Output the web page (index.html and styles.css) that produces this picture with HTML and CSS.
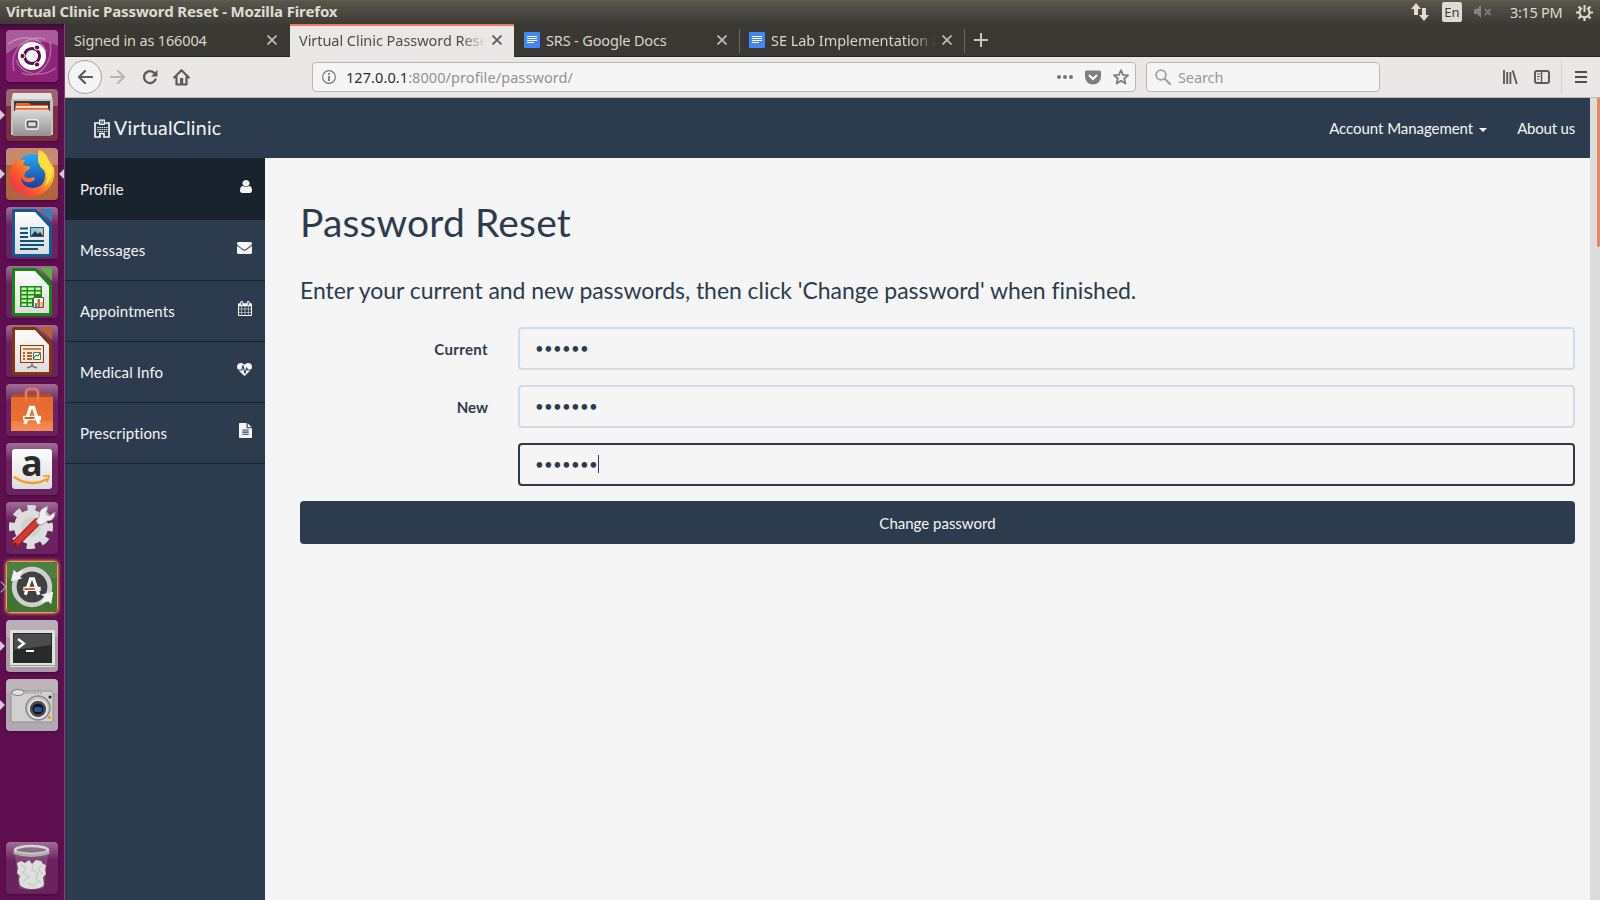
FILE: index.html
```html
<!DOCTYPE html>
<html lang="en">
<head>
<meta charset="utf-8">
<title>Virtual Clinic Password Reset</title>
<link rel="stylesheet" href="styles.css">
</head>
<body>
<svg class="defs" width="0" height="0" aria-hidden="true">
  <defs>
    <linearGradient id="tile" x1="0" y1="0" x2="0" y2="1"><stop offset="0" stop-color="#a06f97"/><stop offset=".35" stop-color="#6c2160"/><stop offset="1" stop-color="#6a2360"/></linearGradient>
    <linearGradient id="silver" x1="0" y1="0" x2="0" y2="1"><stop offset="0" stop-color="#d8d8d8"/><stop offset="1" stop-color="#929292"/></linearGradient>
    <linearGradient id="page" x1="0" y1="0" x2="0" y2="1"><stop offset="0" stop-color="#fdfdfd"/><stop offset="1" stop-color="#dcdcdc"/></linearGradient>
    <linearGradient id="fox" x1="1" y1="0" x2="0" y2="1"><stop offset="0" stop-color="#fff04a"/><stop offset=".35" stop-color="#ffb02e"/><stop offset=".65" stop-color="#ff5a2a"/><stop offset="1" stop-color="#e8205a"/></linearGradient>
    <linearGradient id="globe" x1="0" y1="0" x2="0" y2="1"><stop offset="0" stop-color="#29a9f5"/><stop offset="1" stop-color="#123f9c"/></linearGradient>
    <linearGradient id="bag" x1="0" y1="0" x2="0" y2="1"><stop offset="0" stop-color="#e06c34"/><stop offset=".75" stop-color="#ee6f2c"/><stop offset="1" stop-color="#ee8144"/></linearGradient>
  </defs>
</svg>

<header class="panel">
  <span class="panel-title">Virtual Clinic Password Reset - Mozilla Firefox</span>
  <div class="tray">
    <svg class="tray-net" width="18" height="18" viewBox="0 0 18 18" fill="#dfdbd2"><path d="M5 0l5 6H7v6H3V6H0zM13 18l5-6h-3V5h-4v7H8z"/></svg>
    <span class="lang">En</span>
    <svg class="tray-vol" width="18" height="14" viewBox="0 0 18 14"><path d="M0 4h3l4-4v13L3 9H0z" fill="#85827b"/><path d="M11 4l5.500 6M16.500 4L11 10" stroke="#85827b" stroke-width="1.800"/></svg>
    <span class="clock">3:15 PM</span>
    <svg class="tray-gear" width="17" height="17" viewBox="0 0 17 17" fill="none" stroke="#dfdbd2"><path d="M6 4A5 5 0 1 0 11 4" stroke-width="2"/><path d="M8.500 1v7" stroke-width="2"/><path d="M8.500 13.500V17M0 8.500h3.500M13.500 8.500H17M2.500 2.500l2 2M14.500 2.500l-2 2M2.500 14.500l2-2M14.500 14.500l-2-2" stroke-width="2.200"/></svg>
  </div>
</header>

<div class="desktop">
  <nav class="launcher">
    <div class="app"><svg viewBox="0 0 52 52"><rect width="52" height="52" rx="4" fill="#8d2478"/><path d="M0 4a4 4 0 0 1 4-4h44a4 4 0 0 1 4 4v12Q26 4 0 24z" fill="#fff" opacity=".25"/><g fill="none" stroke="#fff" stroke-width="1.500" opacity=".3"><path d="M8 41C3 20 20 4 39 9M44 12c4 22-12 38-28 31M2 14c14-10 34-8 38 8M50 38C35 49 15 44 10 30"/></g><circle cx="26" cy="26" r="14" fill="#fff"/><circle cx="26" cy="26" r="7.600" fill="none" stroke="#5b1050" stroke-width="3"/><g fill="#5b1050" stroke="#fff" stroke-width="1"><circle cx="16.500" cy="26" r="2.600"/><circle cx="31" cy="17.500" r="2.600"/><circle cx="31" cy="34.500" r="2.600"/></g></svg></div>
    <div class="app running"><svg viewBox="0 0 52 52"><rect width="52" height="52" rx="4" fill="#7d2e41"/><path d="M0 4a4 4 0 0 1 4-4h44a4 4 0 0 1 4 4v13H0z" fill="#fff" opacity=".25"/><path d="M7 4h38l2 8v34H5V12z" fill="#c3c3c3"/><path d="M7 4h38l1 6H6z" fill="#e3e3e3"/><path d="M8 12h36v12H8z" fill="#3b3a39"/><path d="M10 14h13l2 2h17v8H9v-6z" fill="#dd6b30"/><path d="M10 18h32" stroke="#fff" stroke-width="1.500"/><path d="M9 20h34v4H9z" fill="#e98e4d"/><path d="M7 23l3-2h32l3 2v24H7z" fill="url(#silver)"/><rect x="19.500" y="30.500" width="13" height="10" rx="2" fill="#c9c9c9" stroke="#eee"/><rect x="21.500" y="32.500" width="9" height="5.500" rx="1" fill="#ddd" stroke="#4b4b4b" stroke-width="1.500"/></svg></div>
    <div class="app running focused"><svg viewBox="0 0 52 52"><rect width="52" height="52" rx="4" fill="#b06440"/><path d="M0 4a4 4 0 0 1 4-4h44a4 4 0 0 1 4 4v13H0z" fill="#fff" opacity=".25"/><circle cx="27" cy="23" r="17" fill="url(#globe)"/><path d="M8 8l3 6q4-3 8-2l-2 5 7 2q1 2-4 4l-2 5q4 4 9 1 4 1 0 4-8 4-12-4 1 11 12 11 12-1 12-13 0-5-5-8 1-9-1-17 7 2 9 9l6 9q2 14-7 22-7 7-16 6C10 47 2 38 4 26q0-7 4-9z" fill="url(#fox)"/><path d="M33 2q10 6 10 15l4 2q0 14-9 20 6-10 0-18-6-4-6-10 0-5 1-9z" fill="#ffdf3b"/></svg></div>
    <div class="app"><svg viewBox="0 0 52 52"><rect width="52" height="52" rx="4" fill="url(#tile)"/><path d="M8 2h22l16 16v30q0 2-2 2H8q-2 0-2-2V4q0-2 2-2z" fill="#0e5d92"/><path d="M9 5h20l14 15v27H9z" fill="url(#page)"/><path d="M34 2h12v13z" fill="#2f82b6"/><path d="M14 21.500h8M14 26h8M14 30h8M14 34h24M14 38h24M14 42h18" stroke="#114f7b" stroke-width="2"/><rect x="24.500" y="20.500" width="13" height="9" fill="#8fc6ea" stroke="#155d8f"/><path d="M25 29l4-5 3 3 2-2 3 4z" fill="#333"/><circle cx="35" cy="23" r="1.500" fill="#f7d038"/></svg></div>
    <div class="app"><svg viewBox="0 0 52 52"><rect width="52" height="52" rx="4" fill="url(#tile)"/><path d="M8 2h22l16 16v30q0 2-2 2H8q-2 0-2-2V4q0-2 2-2z" fill="#16880e"/><path d="M9 5h20l14 15v27H9z" fill="url(#page)"/><path d="M34 2h12v13z" fill="#4fb543"/><path d="M14 20h22v21H14z" fill="#1c8b14"/><g fill="#c8f0b0"><path d="M15.500 21.500h5v2.500h-5zM22 21.500h6v2.500h-6zM29.500 21.500h5v2.500h-5zM15.500 25.500h5v2.500h-5zM22 25.500h6v2.500h-6zM29.500 25.500h5v2.500h-5zM15.500 29.500h5V32h-5zM22 29.500h6V32h-6zM15.500 33.500h5V36h-5zM22 33.500h4V36h-4zM15.500 37.500h5V40h-5zM22 37.500h4V40h-4z"/></g><path d="M27.500 31.500h10v10h-10z" fill="#fff" stroke="#555"/><path d="M29 37h2v4h-2z" fill="#2d88cf"/><path d="M31.500 33h2.500v8h-2.500z" fill="#e55e25"/><path d="M34.500 36H37v5h-2.500z" fill="#f2b821"/></svg></div>
    <div class="app"><svg viewBox="0 0 52 52"><rect width="52" height="52" rx="4" fill="url(#tile)"/><path d="M8 2h22l16 16v30q0 2-2 2H8q-2 0-2-2V4q0-2 2-2z" fill="#84370b"/><path d="M9 5h20l14 15v27H9z" fill="url(#page)"/><path d="M34 2h12v13z" fill="#b8622a"/><path d="M26 38v3l-5 2M26 41l5 2" stroke="#777" stroke-width="1.500" fill="none"/><rect x="14.500" y="20.500" width="23" height="17" fill="#fbe6d6" stroke="#8a3b10"/><path d="M17 24h18" stroke="#cc5a20" stroke-width="1.500"/><path d="M17 28h2m2 0h5M17 31h2m2 0h5M17 34h2m2 0h5" stroke="#8a3b10" stroke-width="1.600"/><path d="M27.500 27.500h7v7h-7z" fill="#fff" stroke="#666"/><path d="M28 33l2-3 2 1 2-3" stroke="#24982a" fill="none" stroke-width="1.300"/></svg></div>
    <div class="app"><svg viewBox="0 0 52 52"><rect width="52" height="52" rx="4" fill="url(#tile)"/><path d="M5 14l3-4h36l3 4z" fill="#b54c20"/><path d="M5 13h42v34H5z" fill="url(#bag)"/><path d="M5 37h42v10H5z" fill="#fff" opacity=".12"/><path d="M20 18V9q0-4 4-4h4q4 0 4 4v9" fill="none" stroke="#e97a46" stroke-width="2.600"/><path d="M19 40L24.500 23.500h3L33 40" fill="none" stroke="#fff" stroke-width="3.400"/><path d="M17 34h18" stroke="#fff" stroke-width="4.500"/><path d="M18.500 34h10" stroke="#e85a1e" stroke-width="2"/></svg></div>
    <div class="app"><svg viewBox="0 0 52 52"><rect width="52" height="52" rx="4" fill="url(#tile)"/><rect x="6" y="6" width="40" height="40" rx="3" fill="url(#page)"/><text x="15" y="33" class="amazon-a">a</text><path d="M8 34q17 11 33 2" fill="none" stroke="#f79a1d" stroke-width="2.500"/><path d="M37 33l6 0-2 6" fill="none" stroke="#f79a1d" stroke-width="1.700"/></svg></div>
    <div class="app"><svg viewBox="0 0 52 52"><rect width="52" height="52" rx="4" fill="url(#tile)"/><circle cx="25" cy="25" r="19" fill="none" stroke="#dcdcdc" stroke-width="6" stroke-dasharray="8 6.920" transform="rotate(-12 25 25)"/><circle cx="25" cy="25" r="12.500" fill="#ececec" stroke="#dedede" stroke-width="9"/><circle cx="25" cy="25" r="10" fill="#d0d0d0"/><path d="M10 41L31 20" stroke="#9d1c1c" stroke-width="7.500" stroke-linecap="round"/><path d="M10 41L31 20" stroke="#d43a33" stroke-width="5.500" stroke-linecap="round"/><path d="M32 22l-2-3 3-4q-1-8 9-11l-2 8 3 2 6-4q0 9-8 9l-5 4z" fill="#efefef" stroke="#a2a2a2"/><circle cx="9" cy="42.500" r="2" fill="#811717"/></svg></div>
    <div class="app glow urgent"><svg viewBox="0 0 52 52"><rect width="52" height="52" rx="4" fill="#3e7533"/><path d="M0 4a4 4 0 0 1 4-4h44a4 4 0 0 1 4 4v13H0z" fill="#fff" opacity=".08"/><circle cx="26" cy="26" r="18.500" fill="#3f403f" stroke="#cfcfcf" stroke-width="5"/><path d="M4 20L7 8l3 3 7-3-4 7 3 2zM48 31l-2 13-3-3-8 2 4-7-4-2z" fill="#f1f1f1"/><path d="M19 34l5.500-16.500h3L33 34" fill="none" stroke="#fff" stroke-width="3.400"/><path d="M17 28h18" stroke="#fff" stroke-width="4.500"/><path d="M18 28h11" stroke="#ea5b1c" stroke-width="2"/></svg></div>
    <div class="app running"><svg viewBox="0 0 52 52"><rect width="52" height="52" rx="4" fill="#a99aa6"/><path d="M0 4a4 4 0 0 1 4-4h44a4 4 0 0 1 4 4v13H0z" fill="#fff" opacity=".2"/><rect x="4" y="10" width="45" height="37" rx="1" fill="#e0e0de"/><rect x="7" y="13" width="39" height="30" fill="#282b2a"/><path d="M8 14h37v11L8 30z" fill="#4a4d4c"/><path d="M12 19l6 4.500-6 4.500" fill="none" stroke="#fff" stroke-width="2.200"/><path d="M20 31h8" stroke="#fff" stroke-width="2"/><path d="M4 45.500h45" stroke="#9d9d9d"/></svg></div>
    <div class="app running"><svg viewBox="0 0 52 52"><rect width="52" height="52" rx="4" fill="#b3a8b0"/><path d="M0 4a4 4 0 0 1 4-4h44a4 4 0 0 1 4 4v10H0z" fill="#fff" opacity=".15"/><rect x="5" y="12" width="42" height="31" rx="2" fill="#d0d0d0" stroke="#8f8f8f"/><ellipse cx="12" cy="13.500" rx="6" ry="3" fill="#e0e0e0" stroke="#777"/><path d="M19 14h17" stroke="#888" stroke-dasharray="2 1"/><circle cx="32" cy="29" r="12" fill="#c5c5c5" stroke="#8a8a8a" stroke-width="1.500"/><circle cx="32" cy="30" r="9" fill="#4c4e50" stroke="#eee" stroke-width="1.500"/><circle cx="32" cy="30" r="5.500" fill="#12161c"/><rect x="28" y="28" width="8" height="5" rx="2" fill="#225a9b"/><circle cx="44" cy="18" r="1.500" fill="#222"/><rect x="42" y="37" width="3" height="3" fill="#f39b1b"/></svg></div>
    <div class="app trash"><svg viewBox="0 0 52 52"><rect width="52" height="52" rx="4" fill="url(#tile)"/><path d="M9 13l4 33q12 4 25 0l4-33z" fill="#a995a7" opacity=".3"/><path d="M11 21l4-2 4 2 4-3 3 4 4-4 5 1 2 3 3 1-1 5 1 4-3 3 1 8q-3 4-12 4t-12-4l-1-5 1-4-3-3 1-5z" fill="#dfe0de"/><path d="M15 23l5 3-3 5 6 4-6 5M27 22l-1 6 6 3-2 6 5 4M36 23l-4 5 5 4M22 41l5 3 4-4" fill="none" stroke="#c6c8c4" stroke-width="1.200"/><ellipse cx="25.500" cy="8" rx="17.500" ry="5" fill="#8b6d87"/><ellipse cx="25.500" cy="8" rx="16.500" ry="4" fill="none" stroke="#d6d7d5" stroke-width="2.500"/><path d="M7.500 9v3q18 6 36 0V9q-18 6-36 0z" fill="#aeb0ac"/></svg></div>
  </nav>

  <div class="browser">
    <div class="tabs">
      <div class="tab first"><span class="tab-label signed">Signed in as 166004</span><svg class="x" viewBox="0 0 10 10"><path d="M.5.500l9 9M9.500.500l-9 9"/></svg></div>
      <div class="tab active"><span class="tab-label fade">Virtual Clinic Password Reset</span><svg class="x" viewBox="0 0 10 10"><path d="M.5.500l9 9M9.500.500l-9 9"/></svg></div>
      <div class="tab"><svg class="doc" viewBox="0 0 16 16"><rect width="16" height="16" rx="1" fill="#4285f4"/><path d="M3 4.500h10M3 6.500h10M3 8.500h10M3 10.500h7" stroke="#fff"/></svg><span class="tab-label srs">SRS - Google Docs</span><svg class="x" viewBox="0 0 10 10"><path d="M.5.500l9 9M9.500.500l-9 9"/></svg></div>
      <div class="tab"><svg class="doc" viewBox="0 0 16 16"><rect width="16" height="16" rx="1" fill="#4285f4"/><path d="M3 4.500h10M3 6.500h10M3 8.500h10M3 10.500h7" stroke="#fff"/></svg><span class="tab-label fade">SE Lab Implementation Plan</span><svg class="x" viewBox="0 0 10 10"><path d="M.5.500l9 9M9.500.500l-9 9"/></svg></div>
      <svg class="plus" width="14" height="14" viewBox="0 0 14 14"><path d="M7 0v14M0 7h14" stroke="#c9c6bd" stroke-width="2"/></svg>
    </div>

    <div class="toolbar">
      <span class="back"><svg width="16" height="14" viewBox="0 0 16 14"><path d="M15 7H2M8 1L2 7l6 6" fill="none" stroke="#5b5b5b" stroke-width="2.200" stroke-linecap="round" stroke-linejoin="round"/></svg></span>
      <svg class="forward" width="16" height="14" viewBox="0 0 16 14"><path d="M1 7h13M8 1l6 6-6 6" fill="none" stroke="#b7b6b5" stroke-width="2.200" stroke-linecap="round" stroke-linejoin="round"/></svg>
      <svg class="reload" width="16" height="16" viewBox="0 0 16 16"><path d="M12.600 4.200A6 6 0 1 0 13.500 10.500" fill="none" stroke="#5b5b5b" stroke-width="2.300" stroke-linecap="round"/><path d="M15.500.800V7.500H9z" fill="#5b5b5b"/></svg>
      <svg class="home" width="17" height="17" viewBox="0 0 17 17"><path d="M1.200 8.500l7.300-7.300 7.300 7.300M3.500 8v7.500h10V8" fill="none" stroke="#5b5b5b" stroke-width="2.200" stroke-linecap="round" stroke-linejoin="round"/><path d="M7 9h3.200v6H7z" fill="#5b5b5b"/></svg>
      <div class="field url">
        <svg width="14" height="14" viewBox="0 0 14 14"><circle cx="7" cy="7" r="6.400" fill="none" stroke="#777" stroke-width="1.200"/><path d="M7 3v1.800M7 6v5" stroke="#777" stroke-width="1.800"/></svg>
        <span class="address"><b>127.0.0.1</b>:8000/profile/password/</span>
        <svg class="dots" width="16" height="4" viewBox="0 0 16 4" fill="#747474"><circle cx="2" cy="2" r="2"/><circle cx="8" cy="2" r="2"/><circle cx="14" cy="2" r="2"/></svg>
        <svg class="pocket" width="16" height="15" viewBox="0 0 16 15"><path d="M1.500.500h13q1.500 0 1.500 1.500v4.500a8 8 0 0 1-16 0V2Q0 .500 1.500.500z" fill="#7e7e7e"/><path d="M4.500 5.500L8 9l3.500-3.500" stroke="#fff" stroke-width="2" fill="none" stroke-linecap="round"/></svg>
        <svg class="star" width="16" height="16" viewBox="0 0 16 16"><path d="M8 1.200l2 4.600 5 .4-3.800 3.300 1.200 5L8 11.800l-4.400 2.700 1.200-5L1 6.200l5-.4z" fill="none" stroke="#7e7e7e" stroke-width="1.800" stroke-linejoin="round"/></svg>
      </div>
      <div class="field search">
        <svg width="16" height="16" viewBox="0 0 16 16" fill="none" stroke="#a0a0a0"><circle cx="6" cy="6" r="4.900" stroke-width="1.800"/><path d="M9.800 9.800l5.200 5.200" stroke-width="2.200" stroke-linecap="round"/></svg>
        <span>Search</span>
      </div>
      <svg class="library" width="15" height="14" viewBox="0 0 15 14" stroke="#5b5b5b" stroke-width="1.900"><path d="M1 0v14M4.200 2v12M7.400 2v12M9.700.400L13.800 14"/></svg>
      <svg class="sidebar-icon" width="16" height="14" viewBox="0 0 16 14" fill="none" stroke="#5b5b5b"><rect x="1" y="1" width="14" height="12" rx="2" stroke-width="2"/><path d="M7.500 1v12" stroke-width="1.500"/><path d="M3 4h3M3 6.500h3M3 9h2"/></svg>
      <i class="rule"></i>
      <svg width="12" height="12" viewBox="0 0 12 12"><path d="M0 1h12M0 6h12M0 11h12" stroke="#4e4e4e" stroke-width="2"/></svg>
    </div>

    <div class="viewport">
      <div class="site">
        <div class="navbar">
          <svg class="hospital" width="16" height="19" viewBox="0 0 16 19"><path d="M5 4H1v14h5v-3.500h4V18h5V4h-4" fill="none" stroke="#f5f5f5" stroke-width="1.700"/><path d="M5 .5h6v5.500H5z" fill="#f5f5f5"/><path d="M6.800 1.500v3.500M9.200 1.500v3.500M7 3.300h2" stroke="#2c3c4e"/><path d="M3.300 8.500h10M3.300 10.500h10M3.300 12.500h10" stroke="#f5f5f5" stroke-width="1.200" stroke-dasharray="1.400 .800"/></svg>
          <span class="brand">VirtualClinic</span>
          <span class="link account">Account Management</span><i class="caret"></i>
          <span class="link about">About us</span>
        </div>
        <div class="body">
          <ul class="menu">
            <li class="current">Profile<svg width="12" height="13" viewBox="256 128 1280 1536" preserveAspectRatio="none"><path d="M1536 1399q0 109-62.500 187t-150.500 78h-854q-88 0-150.500-78t-62.500-187q0-85 8.500-160.500t31.500-152 58.500-131 94-89 134.500-34.500q131 128 313 128t313-128q76 0 134.500 34.500t94 89 58.500 131 31.500 152 8.500 160.500zm-256-887q0 159-112.500 271.500t-271.500 112.500-271.500-112.500-112.500-271.500 112.500-271.500 271.500-112.500 271.500 112.500 112.500 271.500z"/></svg></li>
            <li>Messages<svg class="mail" width="15" height="12" viewBox="0 256 1792 1408" preserveAspectRatio="none"><path d="M1792 710v794q0 66-47 113t-113 47h-1472q-66 0-113-47t-47-113v-794q44 49 101 87 362 246 497 345 57 42 92.500 65.500t94.500 48 110 24.500h2q51 0 110-24.500t94.500-48 92.500-65.500q170-123 498-345 57-39 100-87zm0-294q0 79-49 151t-122 123q-376 261-468 325-10 7-42.500 31t-54 38.500-52 32.500-57.500 27-50 9h-2q-23 0-50-9t-57.500-27-52-32.500-54-38.500-42.500-31q-91-64-262-182.500t-205-142.500q-62-42-117-115.500t-55-136.500q0-78 41.500-130t118.500-52h1472q65 0 112.500 47t47.500 113z"/></svg></li>
            <li>Appointments<svg width="14" height="15" viewBox="64 0 1664 1792" preserveAspectRatio="none"><path d="M192 1664h288v-288h-288v288zm352 0h320v-288h-320v288zm-352-352h288v-320h-288v320zm352 0h320v-320h-320v320zm-352-384h288v-288h-288v288zm736 736h320v-288h-320v288zm-384-736h320v-288h-320v288zm768 736h288v-288h-288v288zm-384-352h320v-320h-320v320zm-352-864v-288q0-13-9.500-22.500t-22.500-9.500h-64q-13 0-22.500 9.500t-9.500 22.500v288q0 13 9.500 22.500t22.500 9.500h64q13 0 22.500-9.500t9.500-22.500zm736 864h288v-320h-288v320zm-384-384h320v-288h-320v288zm384 0h288v-288h-288v288zm32-480v-288q0-13-9.500-22.500t-22.500-9.500h-64q-13 0-22.500 9.500t-9.500 22.500v288q0 13 9.500 22.500t22.500 9.500h64q13 0 22.500-9.500t9.500-22.500zm384-64v1280q0 52-38 90t-90 38h-1408q-52 0-90-38t-38-90v-1280q0-52 38-90t90-38h128v-96q0-66 47-113t113-47h64q66 0 113 47t47 113v96h384v-96q0-66 47-113t113-47h64q66 0 113 47t47 113v96h128q52 0 90 38t38 90z"/></svg></li>
            <li>Medical Info<svg width="15" height="13" viewBox="0 128 1792 1536" preserveAspectRatio="none"><path d="M1280 1024h305q-5 6-10 10.500t-9 7.500l-3 4-623 600q-18 18-44 18t-44-18l-624-602q-5-2-21-20h369q22 0 39.500-13.500t22.500-34.500l70-281 190 667q6 20 23 33t39 13q21 0 38-13t23-33l146-485 56 112q18 35 57 35zm512-428q0 145-103 300h-369l-111-221q-8-17-25.500-27t-36.500-8q-45 5-56 46l-129 430-196-686q-6-20-23.500-33t-39.500-13-39 13.500-22 34.500l-116 464h-423q-103-155-103-300 0-220 127-344t351-124q62 0 126.500 21.500t120 58 95.500 68.500 76 68q36-36 76-68t95.500-68.500 120-58 126.500-21.500q224 0 351 124t127 344z"/></svg></li>
            <li>Prescriptions<svg width="13" height="15" viewBox="128 0 1536 1792" preserveAspectRatio="none"><path d="M1596 476q14 14 28 36h-472v-472q22 14 36 28zm-476 164h544v1056q0 40-28 68t-68 28h-1344q-40 0-68-28t-28-68v-1600q0-40 28-68t68-28h800v544q0 40 28 68t68 28zm160 736v-64q0-14-9-23t-23-9h-704q-14 0-23 9t-9 23v64q0 14 9 23t23 9h704q14 0 23-9t9-23zm0-256v-64q0-14-9-23t-23-9h-704q-14 0-23 9t-9 23v64q0 14 9 23t23 9h704q14 0 23-9t9-23zm0-256v-64q0-14-9-23t-23-9h-704q-14 0-23 9t-9 23v64q0 14 9 23t23 9h704q14 0 23-9t9-23z"/></svg></li>
          </ul>
          <main>
            <h1>Password Reset</h1>
            <p class="lead">Enter your current and new passwords, then click 'Change password' when finished.</p>
            <div class="row"><label class="wide">Current</label><div class="input">••••••</div></div>
            <div class="row"><label>New</label><div class="input">•••••••</div></div>
            <div class="row"><label></label><div class="input focus">•••••••<i class="cursor"></i></div></div>
            <button type="button">Change password</button>
          </main>
        </div>
      </div>
      <div class="scrollbar"><i></i></div>
    </div>
  </div>
</div>
</body>
</html>
```

FILE: styles.css
```css
* { box-sizing: border-box; }
body {
  margin: 0; width: 1600px; height: 900px; overflow: hidden;
  display: flex; flex-direction: column;
  font-family: "Noto Sans", sans-serif; font-size: 14.5px;
}
svg { display: block; flex: none; }
.defs { position: absolute; }

/* top panel */
.panel {
  height: 24px; flex: none; display: flex; align-items: center; justify-content: space-between;
  padding: 0 7px 0 6px; color: #dfdbd2;
  background: linear-gradient(#5f5d53 0, #57544a 2px, #3c3b37 24px);
}
.panel-title { font-weight: 700; font-size: 15px; letter-spacing: -.13px; white-space: nowrap; padding-bottom: 2px; }
.tray { display: flex; align-items: center; }
.lang {
  width: 20px; height: 20px; margin-left: 13px; border-radius: 2px; background: #dfdbd2; color: #3c3b37;
  font-size: 13px; line-height: 21px; text-align: center;
}
.tray-vol { margin-left: 12px; }
.clock { width: 53px; margin-left: 18px; white-space: nowrap; letter-spacing: -.3px; padding-bottom: 1px; }
.tray-gear { margin-left: 13px; }

.desktop { flex: 1; display: flex; min-height: 0; }

/* launcher */
.launcher {
  width: 65px; flex: none; padding: 6px 0 6px 6px; display: flex; flex-direction: column; gap: 7px;
  background: linear-gradient(#3f0a36 0, #5f0f50 8px, #5f0f50 100%); border-right: 1px solid #84407a;
}
.app { position: relative; width: 52px; height: 52px; border-radius: 4px; box-shadow: 0 1px 3px rgba(0,0,0,.35); }
.app svg { width: 52px; height: 52px; }
.glow { box-shadow: 0 0 3px 1px #e0843f; }
.glow svg { border-radius: 4px; border: 1px solid #f0a05a; }
.trash { margin-top: auto; }
.running::before, .focused::after, .urgent::before {
  content: ""; position: absolute; top: 21px; border: 5px solid transparent;
}
.running::before { left: -6px; border-left-color: #d5ccd3; border-right: 0; }
.focused::after { right: -6px; border-right-color: #d5ccd3; border-left: 0; }
.urgent::before { left: -9px; top: 22px; width: 7px; height: 7px; border: solid #86b9e0; border-width: 1px 1px 0 0; transform: rotate(45deg); }
.amazon-a { font: 700 36px "Open Sans", sans-serif; fill: #2b2b2b; }

/* browser chrome */
.browser { flex: 1; display: flex; flex-direction: column; min-width: 0; }
.tabs { height: 33px; flex: none; display: flex; background: #3a3833; border-bottom: 1px solid #2a2226; }
.tab {
  width: 225px; height: 32px; display: flex; align-items: center; padding: 0 13px 0 9px; color: #d8d5cc;
  background: linear-gradient(#6b6963, #6b6963) right 5px / 1px 24px no-repeat;
}
.tab.first { background: none; }
.tab.active { width: 224px; height: 33px; background: #e9e8e7; color: #4d4d4d; border-top: 2px solid #ed7d51; padding: 0 12px 3px 9px; }
.tab.active + .tab { width: 226px; padding-left: 10px; }
.tab-label { flex: 1; white-space: nowrap; overflow: hidden; line-height: 24px; letter-spacing: -.05px; }
.signed, .srs { letter-spacing: -.15px; }
.fade { -webkit-mask: linear-gradient(90deg, #000 calc(100% - 25px), transparent); mask: linear-gradient(90deg, #000 calc(100% - 25px), transparent); }
.x { width: 10px; height: 10px; margin-left: 6px; fill: none; stroke: #bdbab2; stroke-width: 1.8; }
.active .x { stroke: #5b5b5b; }
.doc { width: 16px; height: 16px; margin-right: 6px; }
.plus { margin: 9px 0 0 9px; }
.toolbar {
  height: 41px; flex: none; display: flex; align-items: center; padding: 0 13px 0 3px;
  background: #e9e8e7; border-bottom: 1px solid #bdbbb7;
}
.back { width: 34px; height: 34px; border: 1px solid #a3a2a1; border-radius: 50%; background: #f4f4f4; display: flex; align-items: center; justify-content: center; }
.forward { margin-left: 8px; }
.reload { margin-left: 16px; }
.home { margin-left: 15px; }
.field { height: 30px; display: flex; align-items: center; background: #f5f5f5; border: 1px solid #bab8b4; border-radius: 4px; }
.url { width: 824px; margin-left: 122px; padding: 0 6px 0 9px; }
.address { flex: 1; margin-left: 10px; color: #929292; letter-spacing: .08px; }
.address b { font-weight: 400; color: #2e2e2e; }
.pocket { margin-left: 12px; }
.star { margin-left: 12px; }
.search { width: 234px; margin-left: 10px; padding-left: 8px; color: #999; }
.search span { margin-left: 7px; letter-spacing: -.1px; }
.library { margin-left: 123px; }
.sidebar-icon { margin-left: 16px; }
.rule { width: 1px; height: 34px; background: #d0cfce; margin: 0 13px 0 11px; }

/* web page */
.viewport { flex: 1; display: flex; min-height: 0; font-family: Lato, sans-serif; font-size: 15px; }
.site { flex: 1; display: flex; flex-direction: column; background: #f5f5f5; }
.scrollbar { width: 10px; background: #dcdcdc; display: flex; justify-content: flex-end; }
.scrollbar i { width: 3px; height: 149px; background: #e58765; border-radius: 0 0 2px 2px; }
.navbar { height: 60px; flex: none; background: #2c3c4e; color: #f5f5f5; display: flex; align-items: center; padding: 0 15px 0 29px; }
.brand { flex: 1; margin-left: 4px; font-size: 19.5px; letter-spacing: .25px; padding-bottom: 2px; }
.account { letter-spacing: -.05px; }
.caret { margin: 3px 0 0 6px; border: 4px solid transparent; border-top-color: #f5f5f5; border-bottom: 0; }
.about { margin-left: 30px; letter-spacing: -.2px; }
.body { flex: 1; display: flex; min-height: 0; }
.menu { width: 200px; flex: none; margin: 0; padding: 0; list-style: none; background: #2c3c4e; color: #f5f5f5; letter-spacing: .15px; }
.menu li { height: 61px; display: flex; justify-content: space-between; align-items: center; padding: 0 13px 1px 15px; border-bottom: 1px solid #19232d; }
.menu .current { height: 62px; padding-top: 1px; background: #19232d; border-color: #19232d; }
.menu svg { fill: #f5f5f5; margin-bottom: 5px; }
.menu .mail { margin-bottom: 4px; }
main { flex: 1; padding: 41px 15px 0 35px; color: #2c3c4e; }
h1 { margin: 0; font-weight: 400; font-size: 39px; line-height: 46px; letter-spacing: .15px; }
.lead { margin: 30px 0 22px; font-size: 23px; line-height: 30px; white-space: nowrap; letter-spacing: -.05px; }
.row { display: flex; height: 43px; margin-bottom: 15px; }
.row label { width: 188px; margin-right: 30px; text-align: right; font-weight: 700; line-height: 44px; }
.row .wide { letter-spacing: .35px; }
.input { flex: 1; display: flex; align-items: center; border: 2px solid #d3dce4; border-radius: 4px; padding: 0 15px 2px; letter-spacing: .3px; }
.input.focus { border-color: #2c3c4e; }
.cursor { width: 1px; height: 18px; background: #2c3c4e; }
button { display: block; width: 100%; height: 43px; border: 0; border-radius: 4px; background: #2c3c4e; color: #f5f5f5; font: 15px Lato, sans-serif; padding: 1px 0 0; }
```
